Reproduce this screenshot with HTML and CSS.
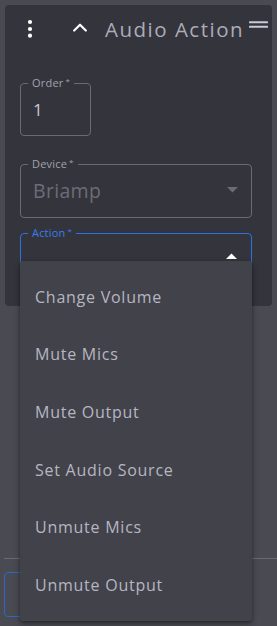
FILE: index.html
```html
<!DOCTYPE html>
<html>
<head>
<meta charset="utf-8">
<link rel="stylesheet" href="styles.css">
</head>
<body>
<div class="page">
  <section class="card">
    <header class="head">
      <button class="icon-btn kebab" aria-label="More">
        <svg width="6" height="20" viewBox="0 0 6 20"><circle cx="3" cy="3" r="2.1" fill="#fff"/><circle cx="3" cy="10" r="2.1" fill="#fff"/><circle cx="3" cy="16.7" r="2.1" fill="#fff"/></svg>
      </button>
      <button class="icon-btn chevron" aria-label="Collapse">
        <svg width="14" height="9" viewBox="0 0 14 9"><polyline points="1.2,7.5 7,1.7 12.8,7.5" fill="none" stroke="#fff" stroke-width="2.2" stroke-linecap="round" stroke-linejoin="round"/></svg>
      </button>
      <h1 class="title">Audio Action</h1>
      <span class="drag" aria-hidden="true">
        <svg width="20" height="8" viewBox="0 0 20 8"><rect x="0" y="0.3" width="19" height="2" rx="0.6" fill="#c9c9d3"/><rect x="0" y="4.8" width="19" height="2" rx="0.6" fill="#c9c9d3"/></svg>
      </span>
    </header>

    <fieldset class="field field-order">
      <legend>Order<span class="req">*</span></legend>
      <div class="value num">1</div>
    </fieldset>

    <fieldset class="field field-device">
      <legend>Device<span class="req">*</span></legend>
      <div class="value disabled">Briamp</div>
      <svg class="caret" width="11" height="6" viewBox="0 0 11 6"><polygon points="0,0 11,0 5.5,5.5" fill="#6c6c76"/></svg>
    </fieldset>

    <fieldset class="field field-action">
      <legend>Action<span class="req">*</span></legend>
      <div class="value"></div>
      <svg class="caret up" width="11" height="6" viewBox="0 0 11 6"><polygon points="0,6 11,6 5.5,0.5" fill="#fff"/></svg>
    </fieldset>
  </section>

  <div class="footer">
    <hr class="rule">
    <div class="ghost-btn"></div>
  </div>

  <ul class="menu">
    <li>Change Volume</li>
    <li>Mute Mics</li>
    <li>Mute Output</li>
    <li>Set Audio Source</li>
    <li>Unmute Mics</li>
    <li>Unmute Output</li>
  </ul>
</div>
</body>
</html>
```

FILE: styles.css
```css
* { box-sizing: border-box; }
html, body {
  margin: 0;
  padding: 0;
  background: #4a4a52;
  font-family: "Open Sans", "Liberation Sans", sans-serif;
  overflow: hidden;
}
.page {
  position: relative;
  width: 277px;
  height: 626px;
  padding-top: 5px;
}
.card {
  margin-left: 5px;
  width: 267px;
  height: 301px;
  background: #34343c;
  border-radius: 4px;
  padding: 0 0 0 15px;
}
.head {
  height: 48px;
  display: flex;
  align-items: center;
}
.icon-btn {
  background: none;
  border: 0;
  padding: 0;
  display: flex;
  align-items: center;
  justify-content: center;
}
.kebab { margin-left: 2px; width: 16px; height: 24px; }
.chevron { margin-left: 35px; width: 14px; height: 24px; margin-top: -3px; }
.title {
  margin: 0 0 0 18px;
  font-weight: 400;
  font-size: 20.5px;
  letter-spacing: 1.5px;
  color: #acacb8;
  line-height: 24px;
  white-space: nowrap;
}
.drag { margin-left: 5px; display: flex; margin-top: -9px; }

.field {
  position: relative;
  margin: 0;
  padding: 0;
  border: 1px solid #6a6a72;
  border-radius: 4px;
  width: 232px;
}
.field legend {
  margin-left: 7px;
  padding: 0 4px;
  font-size: 11px;
  line-height: 12px;
  height: 12px;
  color: #a2a2ac;
  letter-spacing: 0.2px;
}
.req {
  font-size: 8px;
  line-height: 8px;
  position: relative;
  top: -3px;
  margin-left: 2px;
}
.field .value {
  height: 46px;
  display: flex;
  align-items: center;
  padding-left: 12px;
  color: #c8c8d2;
}
.field-order { width: 71px; margin-top: 24px; }
.field-order .value { font-size: 17px; padding-bottom: 6px; }
.field-device { margin-top: 22px; }
.field-device .value { height: 47px; font-size: 19.5px; color: #6c6c76; letter-spacing: 0.3px; padding-bottom: 7px; }
.field-action { margin-top: 9px; border-color: #2f6fe0; }
.field-action legend { color: #3a7cf0; }
.caret { position: absolute; right: 13px; top: 17px; }
.caret.up { top: 14px; right: 14px; }

.footer { margin-top: 252px; }
.rule {
  margin: 0 0 0 4px;
  border: 0;
  height: 1px;
  background: #6a6a74;
}
.ghost-btn {
  margin: 13px 0 0 4px;
  width: 200px;
  height: 45px;
  border: 1px solid #2f66c8;
  border-radius: 4px;
}

.menu {
  position: absolute;
  left: 20px;
  top: 261px;
  width: 232px;
  margin: 0;
  padding: 7px 0;
  list-style: none;
  background: #42424a;
  border-radius: 3px;
  box-shadow: 0 3px 6px rgba(0,0,0,0.35), 0 1px 3px rgba(0,0,0,0.25);
}
.menu li {
  height: 57.6px;
  display: flex;
  align-items: center;
  padding-left: 15px;
  font-size: 16px;
  letter-spacing: 0.75px;
  color: #b6b6c2;
}
```
